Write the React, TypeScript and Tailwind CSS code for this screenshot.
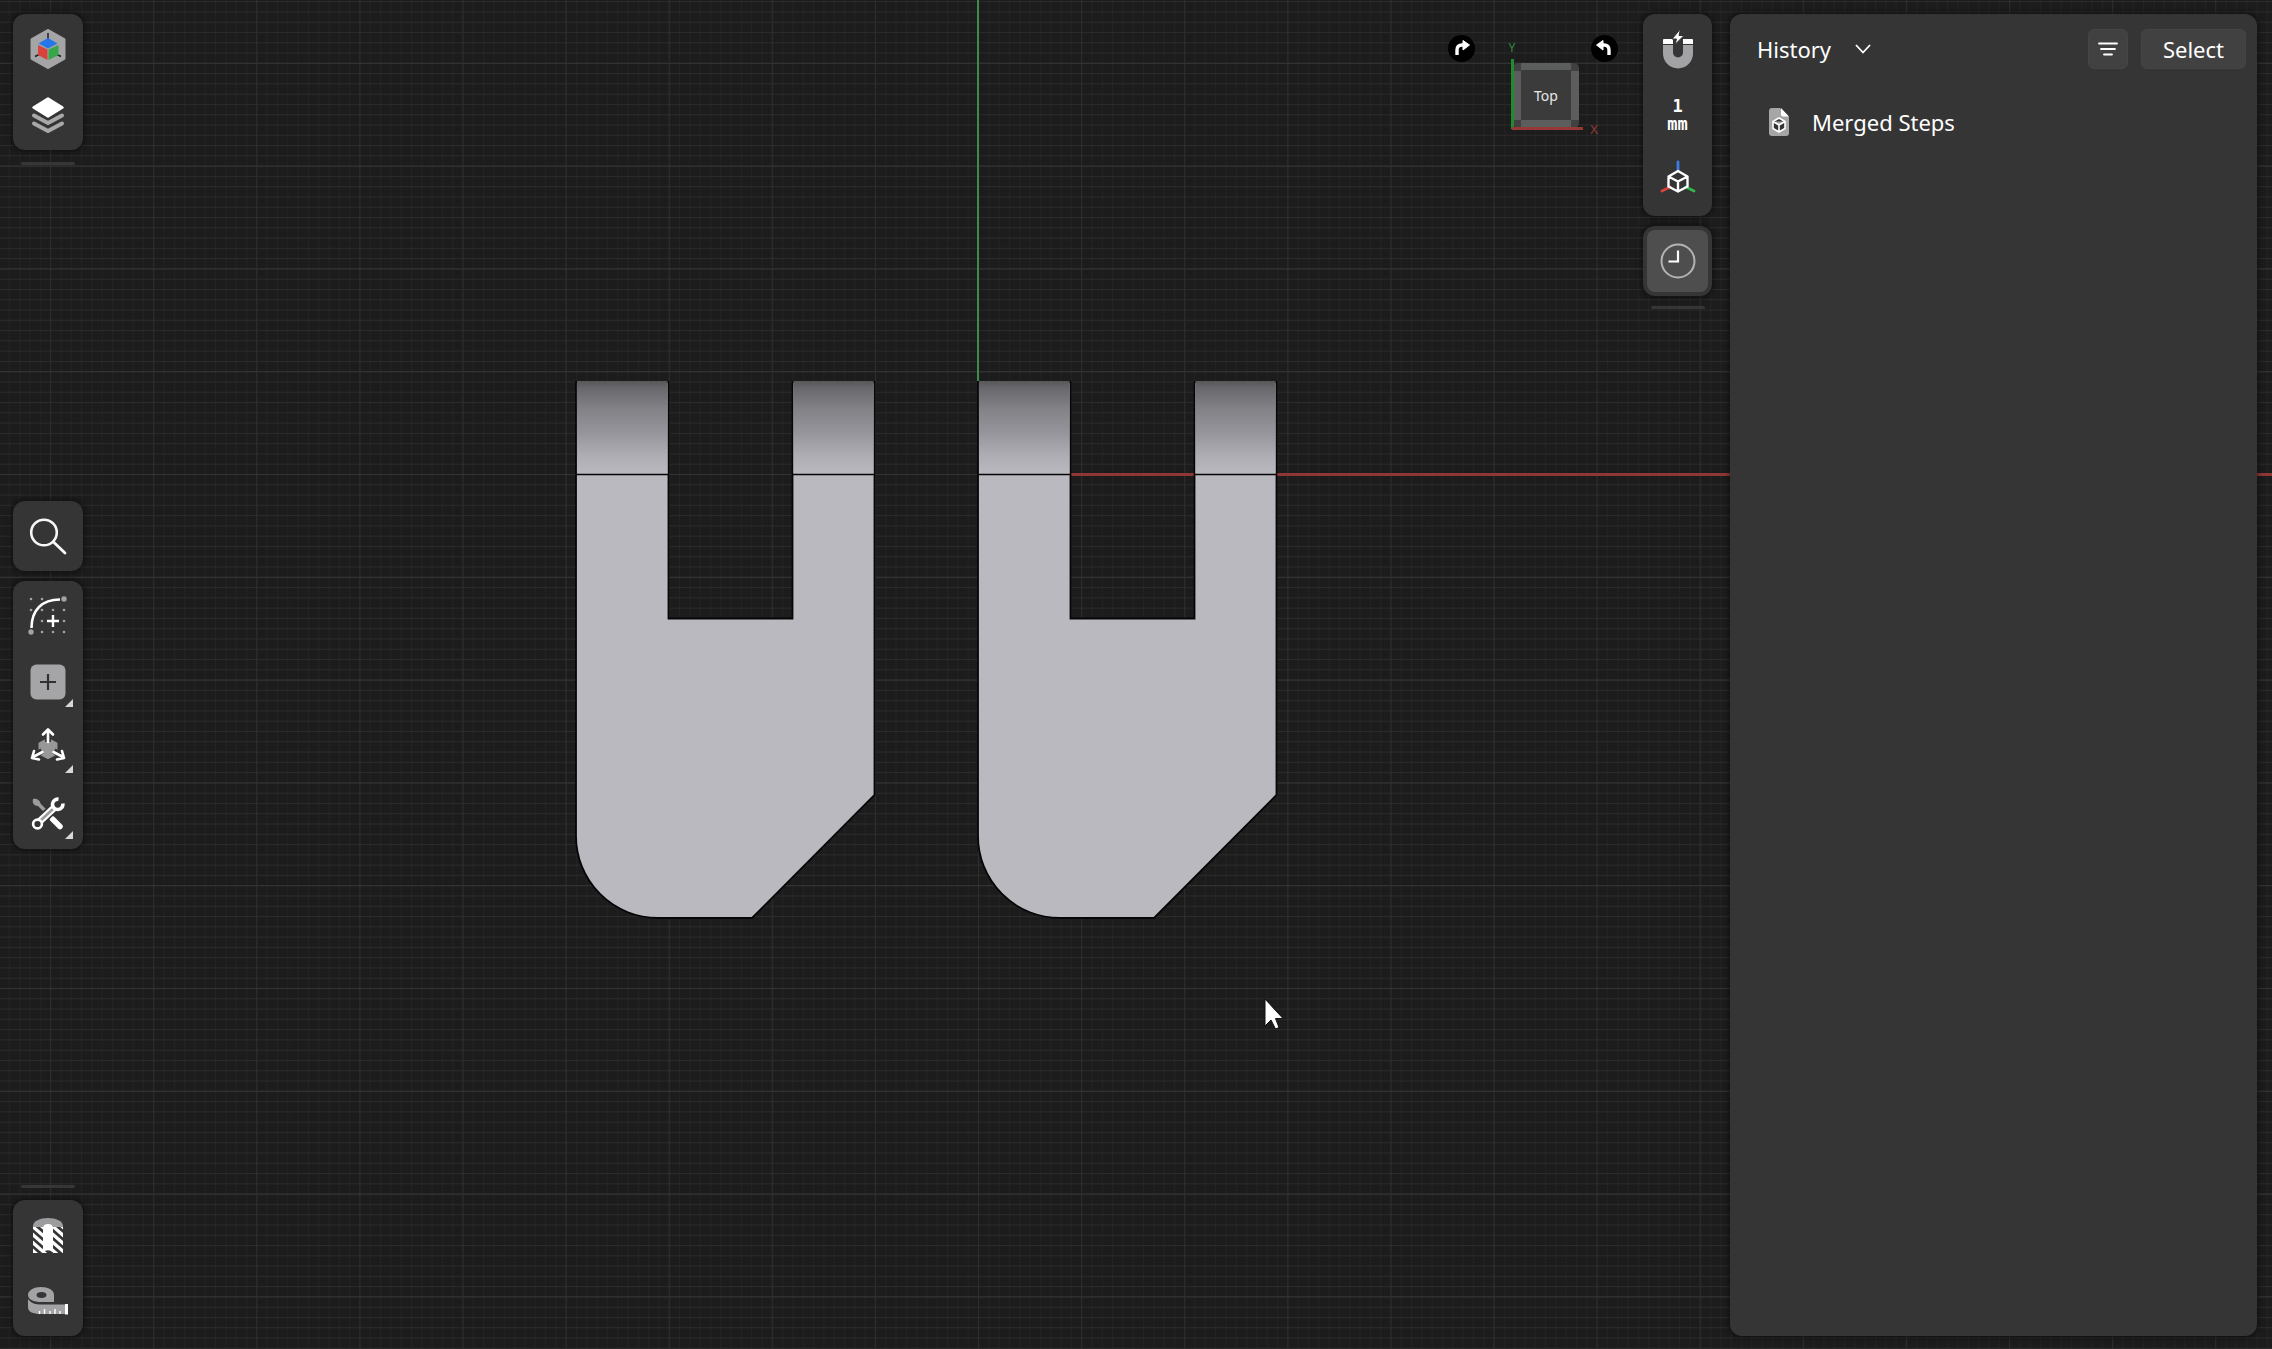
import type { ReactNode } from "react";

const STEP_X = 10.31;
const STEP_Y = 10.28;
const ORIGIN = { x: 978, y: 474 };

interface ToolButtonProps {
  label: string;
  children: ReactNode;
  more?: boolean;
}

function ToolButton({ label, children, more }: ToolButtonProps) {
  return (
    <button aria-label={label} className="relative flex h-[66px] w-full items-center justify-center">
      {children}
      {more && (
        <svg className="absolute right-[10px] bottom-[8px]" width="8" height="8" viewBox="0 0 8 8">
          <path d="M8 0V8H0Z" fill="#d8d8d8" />
        </svg>
      )}
    </button>
  );
}

function Group({ children }: { children: ReactNode }) {
  return (
    <div className="w-full rounded-xl bg-[#353535] py-[2px] shadow-[0_0_5px_2px_rgba(0,0,0,0.4)]">{children}</div>
  );
}

function Handle() {
  return <div className="mx-auto h-[3px] w-[54px] rounded-full bg-[#363636]" />;
}

/* left rail icons */

function ItemsIcon() {
  return (
    <svg width="40" height="42" viewBox="0 0 40 42">
      <path d="M20 2.5L36 11.5V30.500L20 39.500L4 30.500V11.500Z" fill="#a5a5a7" stroke="#a5a5a7" strokeWidth="3" strokeLinejoin="round" />
      <path d="M20 5V12M7 28.500L12 26M33 28.500L28 26" stroke="#202024" strokeWidth="1.500" />
      <path d="M20 10L29.500 15.500L20 20.500L10.500 15.500Z" fill="#2377e8" />
      <path d="M10 17L19.500 21.500V32L10 27Z" fill="#d8433c" />
      <path d="M30.500 17L20.500 21.500V32L30.500 27Z" fill="#37a64b" />
    </svg>
  );
}

function LayersIcon() {
  return (
    <svg width="36" height="38" viewBox="0 0 36 38">
      <path d="M4 19.500L18 27L32 19.500M4 27.500L18 35L32 27.500" fill="none" stroke="#a8a8a8" strokeWidth="4" strokeLinecap="round" strokeLinejoin="round" />
      <path d="M18 2L32 11L18 20L4 11Z" fill="#353535" stroke="#353535" strokeWidth="5" />
      <path d="M18 2.500L32.500 11.500L18 20.500L3.500 11.500Z" fill="#fff" stroke="#fff" strokeWidth="2.500" strokeLinejoin="round" />
    </svg>
  );
}

function SearchIcon() {
  return (
    <svg width="38" height="38" viewBox="0 0 38 38" fill="none" stroke="#f7f7f7" strokeLinecap="round">
      <circle cx="15" cy="15.500" r="12.800" strokeWidth="2.600" />
      <path d="M24.500 25L36 36" strokeWidth="2.800" />
    </svg>
  );
}

const SKETCH_DOTS = [
  [3, 3], [14, 3], [3, 14], [14, 14], [25, 14], [36, 14], [14, 25], [36, 25], [14, 36], [25, 36], [36, 36],
];

function SketchIcon() {
  return (
    <svg width="40" height="40" viewBox="0 0 40 40">
      {SKETCH_DOTS.map(([x, y]) => (
        <circle key={`${x}-${y}`} cx={x} cy={y} r="1.300" fill="#a3a3a3" />
      ))}
      <path d="M3.500 32C3.500 14 14 3.500 32 3.500" fill="none" stroke="#fff" strokeWidth="2.600" />
      <circle cx="36" cy="3" r="2.700" fill="#a3a3a3" />
      <circle cx="3" cy="36" r="2.700" fill="#a3a3a3" />
      <path d="M25 19V31M19 25H31" stroke="#fff" strokeWidth="2.400" />
    </svg>
  );
}

function AddIcon() {
  return (
    <svg width="36" height="36" viewBox="0 0 36 36">
      <rect x="0.500" y="0.500" width="35" height="35" rx="6" fill="#a5a5a7" />
      <path d="M18 10V26M10 18H26" stroke="#303030" strokeWidth="2.200" />
    </svg>
  );
}

function TransformIcon() {
  return (
    <svg width="38" height="42" viewBox="0 0 38 42">
      <path d="M19 12L27.500 16.500V26.500L19 31L10.500 26.500V16.500Z" fill="#98989a" stroke="#98989a" strokeWidth="2" strokeLinejoin="round" />
      <path d="M19 15V3M13 24L4 29.500M25 24L34 29.500" stroke="#353535" strokeWidth="6" />
      <path
        d="M19 15V3M14 7.500L19 2.500L24 7.500M13.500 25L3 30.500M5 24L3 31L10 32.500M24.500 25L35 30.500M33 24L35 31L28 32.500"
        fill="none"
        stroke="#fff"
        strokeWidth="2.600"
        strokeLinecap="round"
        strokeLinejoin="round"
      />
    </svg>
  );
}

function ToolsIcon() {
  return (
    <svg width="34" height="34" viewBox="0 0 34 34">
      <path d="M2 2C5 1 9 3 9.500 6.500L15 12L12 14L7 9C3 9 1 6 2 2Z" fill="#9c9c9e" />
      <path d="M21.500 22L29 29.500" stroke="#fff" strokeWidth="5.500" strokeLinecap="round" />
      <path d="M16 17L21 22" stroke="#fff" strokeWidth="2" />
      <path d="M8 25L24 10" stroke="#353535" strokeWidth="10" />
      <path d="M8 25L24 10" stroke="#fff" strokeWidth="7" />
      <path d="M8.500 24.500L22.500 11.500" stroke="#9c9c9e" strokeWidth="2.600" />
      <path d="M27.500 2.200A5.200 5.200 0 1 0 31.800 6.500" fill="none" stroke="#fff" strokeWidth="3.600" />
      <circle cx="6.500" cy="27" r="4.400" fill="#353535" stroke="#fff" strokeWidth="2.600" />
    </svg>
  );
}

function SectionIcon() {
  return (
    <svg width="32" height="38" viewBox="0 0 32 38">
      <defs>
        <clipPath id="cut">
          <path d="M1 11H31V37H1Z" />
        </clipPath>
      </defs>
      <path d="M1 10C1 5 8 2 16 2S31 5 31 10V11H1Z" fill="#9d9d9f" />
      <g clipPath="url(#cut)" stroke="#fff" strokeWidth="3.200">
        <path d="M-1 1L15 15M-1 9L15 23M-1 17L15 31M-1 25L15 39M-1 33L15 47" />
        <path d="M17 -1L33 13M17 7L33 21M17 15L33 29M17 23L33 37M17 31L33 45" />
      </g>
      <path d="M11 12C11 9.500 13 8 16 8S21 9.500 21 12V36Q16 32.500 11 36Z" fill="#fff" />
    </svg>
  );
}

function MeasureIcon() {
  return (
    <svg width="42" height="30" viewBox="0 0 42 30">
      <path
        fillRule="evenodd"
        d="M14 1C21 1 27 4 27 8.500V16H14C7 16 1 13.500 1 9S7 1 14 1ZM14.500 6C11.500 6 9.500 7 9.500 9S11.500 12 14.500 12 19.500 11 19.500 9 17.500 6 14.500 6Z"
        fill="#a3a3a5"
      />
      <path d="M1 13C4 17.500 9 18.500 14 18.500H38V28H14C6 28 1 26 1 21Z" fill="#a3a3a5" />
      <path d="M38 18H41V28.500H38Z" fill="#fff" />
      <path d="M12.500 25V28M17.500 23V28M23 25V28M28 23V28M33 25V28" stroke="#fff" strokeWidth="1.400" />
    </svg>
  );
}

/* right rail icons */

function SnapIcon() {
  return (
    <svg width="32" height="40" viewBox="0 0 32 40">
      <path d="M1 16H11V23.500A5 5 0 0 0 21 23.500V16H31V24.500A15 15 0 0 1 1 24.500Z" fill="#a3a3a5" />
      <path d="M1 15V11Q1 10 2 10H11V15ZM21 15V10H30Q31 10 31 11V15Z" fill="#fff" />
      <path d="M18.500 0L10 10H14.500L13 15.500L22 6.500H17Z" fill="#fff" stroke="#353535" strokeWidth="1" />
    </svg>
  );
}

function AxesCubeIcon() {
  return (
    <svg width="36" height="42" viewBox="0 0 36 42" fill="none" strokeLinejoin="round" strokeLinecap="round">
      <path d="M18 2V10" stroke="#3b7de0" strokeWidth="2.800" />
      <path d="M10 27L2 31" stroke="#d8443c" strokeWidth="2.800" />
      <path d="M26 27L34 31" stroke="#2fb84c" strokeWidth="2.800" />
      <path d="M18 11L27.500 16.500V26.500L18 31.500L8.500 26.500V16.500ZM8.500 16.500L18 21.500L27.500 16.500M18 21.500V31.500" stroke="#fff" strokeWidth="2.400" />
    </svg>
  );
}

function ClockIcon() {
  return (
    <svg width="36" height="36" viewBox="0 0 36 36" fill="none">
      <circle cx="18" cy="18" r="16.500" stroke="#b4b4b6" strokeWidth="2" />
      <path d="M18 7.500V18.500H8.500" stroke="#fff" strokeWidth="2.200" />
    </svg>
  );
}

/* one bracket, seen from above */
function Bracket({ x }: { x: number }) {
  return (
    <g transform={`translate(${x} 0)`}>
      <path
        d="M0 382H92.500V618.500H216.500V382H298.500V795L176 918H82A82 82 0 0 1 0 836Z"
        fill="#bab9bf"
        stroke="#060606"
        strokeWidth="1.800"
      />
      <path d="M1 381H91.500V474H1ZM217.500 381H297.500V474H217.500Z" fill="url(#bend)" />
      <path d="M0 474.500H92.500M216.500 474.500H298.500" stroke="#060606" strokeWidth="1.600" />
    </g>
  );
}

function Viewport() {
  return (
    <svg className="absolute inset-0 h-full w-full" role="img" aria-label="Model viewport">
      <defs>
        <pattern id="minor" x={ORIGIN.x} y={ORIGIN.y} width={STEP_X} height={STEP_Y} patternUnits="userSpaceOnUse">
          <path d={`M0.500 0V${STEP_Y}`} stroke="#262626" strokeDasharray="2 1" />
          <path d={`M0 0.500H${STEP_X}`} stroke="#2b2b2b" />
        </pattern>
        <pattern id="major" x={ORIGIN.x} y={ORIGIN.y} width={STEP_X * 10} height={STEP_Y * 10} patternUnits="userSpaceOnUse">
          <path d={`M0.500 0V${STEP_Y * 10}`} stroke="#2d2d2d" />
          <path d={`M0 0.500H${STEP_X * 10}`} stroke="#333" />
        </pattern>
        <linearGradient id="bend" x1="0" y1="0" x2="0" y2="1">
          <stop offset="0" stopColor="#58585b" />
          <stop offset="0.080" stopColor="#69696d" />
          <stop offset="0.300" stopColor="#828287" />
          <stop offset="0.560" stopColor="#96959c" />
          <stop offset="0.800" stopColor="#aeadb3" />
          <stop offset="1" stopColor="#bab9bf" />
        </linearGradient>
      </defs>
      <rect width="100%" height="100%" fill="#1c1c1c" />
      <rect width="100%" height="100%" fill="url(#minor)" />
      <rect width="100%" height="100%" fill="url(#major)" />
      <rect x={ORIGIN.x - 1} width="2" height="382" fill="#3d8a4b" />
      <rect x={ORIGIN.x} y={ORIGIN.y - 1} width="100%" height="3" fill="#8f3735" />
      <Bracket x={576} />
      <Bracket x={978} />
      <path
        d="M1265 999V1026L1271 1020L1275.500 1029L1279 1027.500L1275.500 1018.500H1283Z"
        fill="#fff"
        stroke="#111"
        strokeWidth="1"
      />
    </svg>
  );
}

function RotateButton({ label, flip }: { label: string; flip?: boolean }) {
  return (
    <button aria-label={label} className="size-[27px] rounded-full bg-black">
      <svg className={flip ? "-scale-x-100" : ""} width="27" height="27" viewBox="0 0 27 27">
        <path d="M9 20V15Q9 10 14 10H17" fill="none" stroke="#fff" strokeWidth="3.400" />
        <path d="M15 5.500L21.500 10L15 15Z" fill="#fff" stroke="#fff" strokeLinejoin="round" />
      </svg>
    </button>
  );
}

function ViewCube() {
  return (
    <div className="flex pt-[21px]">
      <RotateButton label="Rotate clockwise" />
      <svg className="overflow-visible" width="116" height="100" viewBox="0 0 116 100" fontFamily="'Noto Sans', sans-serif">
        <rect x="38" y="28" width="66" height="65" rx="5" fill="#414141" />
        <path d="M46 28H96V35H46ZM46 85H96V92H46ZM38 36H46V85H38ZM96 36H104V85H96Z" fill="#5c5d5d" />
        <rect x="46" y="35" width="50" height="50" fill="#3b3b3b" />
        <text x="71" y="66" textAnchor="middle" fontSize="14" fill="#e8e8e8">Top</text>
        <rect x="36" y="24" width="3" height="70" fill="#1f8a30" />
        <rect x="37" y="92" width="71" height="3" fill="#963835" />
        <text x="37" y="17" textAnchor="middle" fontSize="12" fill="#2e8c3c">Y</text>
        <text x="119" y="99" textAnchor="middle" fontSize="13" fill="#963835">X</text>
      </svg>
      <RotateButton label="Rotate counterclockwise" flip />
    </div>
  );
}

function HistoryPanel() {
  return (
    <aside className="w-[527px] rounded-xl bg-[#353535] px-[11px] pt-[15px] text-[22px] leading-[30px] text-white shadow-[0_0_5px_2px_rgba(0,0,0,0.4)]">
      <header className="flex items-center gap-[13px]">
        <button className="mr-auto flex items-center gap-6 pl-4">
          History
          <svg width="16" height="10" viewBox="0 0 16 10">
            <path d="M1 1L8 8.500L15 1" fill="none" stroke="#fff" strokeWidth="1.800" />
          </svg>
        </button>
        <button aria-label="Filter" className="flex size-10 items-center justify-center rounded-md border border-[#454545] bg-[#414141]">
          <svg width="20" height="14" viewBox="0 0 20 14" stroke="#fff" strokeWidth="1.800" strokeLinecap="round">
            <path d="M1 1.500H19M3 7H17M6 12.500H14" />
          </svg>
        </button>
        <button className="h-10 w-[105px] rounded-md border border-[#454545] bg-[#414141]">Select</button>
      </header>
      <ul className="mt-[38px]">
        <li className="flex items-center gap-[23px] pl-7">
          <svg width="20" height="28" viewBox="0 0 20 28">
            <path d="M3 0H11L20 9V25Q20 28 17 28H3Q0 28 0 25V3Q0 0 3 0Z" fill="#a6a6a8" />
            <path d="M12 0L20 8.500H14Q12 8.500 12 6.500Z" fill="#fff" />
            <path d="M10 10L16 13.500V20.500L10 24L4 20.500V13.500ZM4 13.500L10 17L16 13.500M10 17V24" fill="#333" stroke="#fff" strokeWidth="1.600" strokeLinejoin="round" />
          </svg>
          Merged Steps
        </li>
      </ul>
    </aside>
  );
}

export default function App() {
  return (
    <div className="relative flex min-h-screen bg-[#1c1c1c] font-['Noto_Sans',sans-serif]">
      <Viewport />
      <div className="relative flex flex-1 justify-between pt-[14px] pr-[15px] pb-[13px] pl-[13px]">
        <nav aria-label="Tools" className="flex w-[70px] flex-col">
          <div className="flex flex-1 flex-col gap-3">
            <Group>
              <ToolButton label="Items"><ItemsIcon /></ToolButton>
              <ToolButton label="Layers"><LayersIcon /></ToolButton>
            </Group>
            <Handle />
          </div>
          <div className="flex flex-col gap-[10px]">
            <Group>
              <ToolButton label="Search"><SearchIcon /></ToolButton>
            </Group>
            <Group>
              <ToolButton label="Sketch"><SketchIcon /></ToolButton>
              <ToolButton label="Add" more><AddIcon /></ToolButton>
              <ToolButton label="Transform" more><TransformIcon /></ToolButton>
              <ToolButton label="Tools" more><ToolsIcon /></ToolButton>
            </Group>
          </div>
          <div className="flex flex-1 flex-col justify-end gap-3">
            <Handle />
            <Group>
              <ToolButton label="Section view"><SectionIcon /></ToolButton>
              <ToolButton label="Measure"><MeasureIcon /></ToolButton>
            </Group>
          </div>
        </nav>

        <div className="flex">
          <ViewCube />
          <div className="mr-[18px] ml-[25px] flex w-[69px] flex-col gap-[10px]">
            <Group>
              <ToolButton label="Snapping"><SnapIcon /></ToolButton>
              <button className="flex h-[66px] w-full flex-col items-center justify-center font-['DejaVu_Sans_Mono',monospace] text-[17px] leading-[18px] font-bold text-white">
                <span>1</span>
                <span>mm</span>
              </button>
              <ToolButton label="Orientation"><AxesCubeIcon /></ToolButton>
            </Group>
            <Group>
              <div className="px-1 py-[2px]">
                <button aria-label="History" aria-pressed="true" className="flex h-[62px] w-full items-center justify-center rounded-lg bg-[#4e4e4e]">
                  <ClockIcon />
                </button>
              </div>
            </Group>
            <Handle />
          </div>
          <HistoryPanel />
        </div>
      </div>
    </div>
  );
}
